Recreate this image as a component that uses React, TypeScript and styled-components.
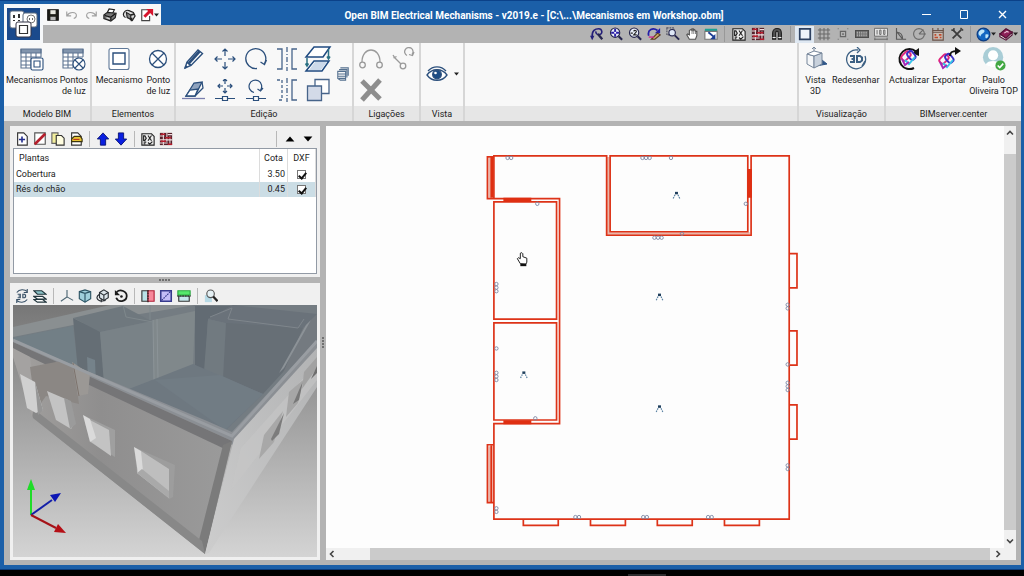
import React from 'react';
import styled, { createGlobalStyle } from 'styled-components';

const GlobalStyle = createGlobalStyle`
  * { box-sizing: border-box; }
  html, body { margin: 0; background: #000; }
  body, button, input, table {
    font-family: Roboto, 'Liberation Sans', sans-serif;
    font-size: 9px;
    line-height: 11px;
    color: #1c1c1c;
  }
  button { border: 0; margin: 0; padding: 0; background: none; }
`;

/* ---------- Window frame ---------- */

const Desktop = styled.div`
  display: flex;
  flex-direction: column;
  height: 100vh;
  min-height: 400px;
  background: #000;
`;

const Window = styled.div`
  flex: 1;
  min-height: 0;
  display: flex;
  flex-direction: column;
  background: #1b5fa8;
  border-top: 1px solid #0b4189;
  border-bottom: 1px solid #0b3a78;
  padding: 0 3px 4px 4px;
`;

const Taskbar = styled.div`
  height: 6px;
  display: flex;
  align-items: flex-end;
  justify-content: center;
  padding-left: 270px;
`;

const TaskIndicator = styled.div`
  width: 38px;
  height: 2px;
  background: #2c2c2e;
`;

const Header = styled.header`
  display: grid;
  grid-template-columns: 39px 1fr;
  grid-template-rows: 24px 18px;
`;

const AppButton = styled.button`
  grid-row: 1 / 3;
  align-self: end;
  height: 39px;
  width: 39px;
  background: #f6f8fa;
  display: flex;
  align-items: center;
  justify-content: center;
`;

const TitleBar = styled.div`
  display: flex;
  align-items: flex-end;
`;

const QuickBar = styled.div`
  display: flex;
  align-items: center;
  width: 118px;
  height: 21px;
  background: #f8f8f8;
`;

const Title = styled.h1`
  flex: 1;
  margin: 0;
  align-self: center;
  padding-top: 4px;
  text-align: center;
  white-space: nowrap;
  font-size: 10px;
  line-height: 13px;
  font-weight: bold;
  color: #fff;
`;

const WindowButton = styled.button`
  width: 38px;
  height: 21px;
  display: flex;
  align-items: center;
  justify-content: center;
`;

const ViewBar = styled.div`
  display: flex;
  align-items: center;
  justify-content: flex-end;
  padding-right: 2px;
  background: #b3b3b3;
`;

const ToolButton = styled.button<{ $active?: boolean; $wide?: boolean }>`
  width: ${p => (p.$wide ? 22 : 19)}px;
  height: 17px;
  display: flex;
  align-items: center;
  justify-content: center;
  background: ${p => (p.$active ? '#dfe8f2' : 'none')};
`;

const Divider = styled.span`
  width: 9px;
  height: 16px;
  display: flex;
  justify-content: center;
  &::before {
    content: '';
    width: 1px;
    background: #989898;
  }
`;

const PanelDivider = styled(Divider)`
  &::before { background: #b8b8b8; }
`;

/* ---------- Ribbon ---------- */

const Ribbon = styled.nav`
  display: flex;
  height: 78px;
  background: #f8f8f8;
`;

const Group = styled.section<{ $width?: number }>`
  ${p => (p.$width ? `width: ${p.$width}px;` : 'flex: 1;')}
  display: flex;
  flex-direction: column;
  border-right: 2px solid #d6d6d6;
  &:last-child { border-right: 0; }
`;

const GroupBody = styled.div`
  flex: 1;
  display: flex;
  justify-content: space-evenly;
  align-items: flex-start;
`;

const GroupLabel = styled.h2`
  margin: 0;
  height: 15px;
  background: #e6e6e6;
  text-align: center;
  font-size: 9px;
  line-height: 16px;
  font-weight: normal;
`;

const BigButton = styled.button`
  padding-top: 4px;
  display: flex;
  flex-direction: column;
  align-items: center;
  gap: 4px;
  white-space: pre;
  text-align: center;
`;

const EditGrid = styled.div`
  display: grid;
  grid-template-columns: repeat(5, 31px);
  grid-template-rows: 31px 31px;
`;

const LinkGrid = styled(EditGrid)`
  grid-template-columns: 32px 32px;
`;

const CellButton = styled.button`
  display: flex;
  align-items: center;
  justify-content: center;
`;

const SideButton = styled(CellButton)`
  height: 62px;
  gap: 6px;
`;

/* ---------- Work area ---------- */

const Work = styled.main`
  flex: 1;
  min-height: 0;
  display: flex;
  background: #b3b3b3;
  padding: 5px 5px 5px 6px;
`;

const Side = styled.aside`
  width: 310px;
  display: flex;
  flex-direction: column;
`;

const Panel = styled.section<{ $grow?: boolean }>`
  ${p => (p.$grow ? 'flex: 1; min-height: 0;' : 'height: 151px;')}
  display: flex;
  flex-direction: column;
  background: #f0f0f0;
  padding: 3px;
`;

const PanelBar = styled.div`
  display: flex;
  align-items: center;
  height: 19px;
`;

const PanelButton = styled.button`
  width: 18px;
  height: 18px;
  display: flex;
  align-items: center;
  justify-content: center;
`;

const Spacer = styled.span`
  flex: 1;
`;

const SplitterRow = styled.div`
  height: 6px;
  display: flex;
  align-items: center;
  justify-content: center;
`;

const SplitterColumn = styled(SplitterRow)`
  height: auto;
  width: 6px;
`;

const ListBox = styled.div`
  flex: 1;
  background: #fff;
  border: 1px solid #929aa5;
`;

const PlanTable = styled.table`
  width: 100%;
  border-collapse: collapse;
  table-layout: fixed;
  th, td { padding: 0 2px; border-right: 1px solid #dcdcdc; }
  th { height: 18px; font-weight: normal; text-align: center; }
  td { height: 15px; }
  th:first-child { text-align: left; padding-left: 5px; }
`;

const PlanRow = styled.tr<{ $selected?: boolean }>`
  background: ${p => (p.$selected ? '#cbdde5' : '#fff')};
`;

const NumberCell = styled.td`
  text-align: right;
`;

const CheckCell = styled.td`
  text-align: center;
`;

const Check = styled.input`
  appearance: none;
  display: block;
  width: 9px;
  height: 9px;
  margin: 0 auto;
  border: 1px solid #777;
  background: #fff;
  &:checked::after {
    content: '';
    display: block;
    width: 3px;
    height: 6px;
    margin: 0 0 0 2px;
    border: solid #111;
    border-width: 0 2px 2px 0;
    transform: rotate(40deg);
  }
`;

const Scene = styled.svg`
  display: block;
  width: 100%;
  flex: 1;
  min-height: 0;
`;

const CanvasFrame = styled.section`
  flex: 1;
  min-width: 0;
  display: grid;
  grid-template-columns: 1fr 12px;
  grid-template-rows: 1fr 12px;
  background: #f0f0f0;
`;

const Plan = styled.svg`
  width: 100%;
  height: 100%;
  min-height: 0;
  background: #fdfdfd;
`;

const VScroll = styled.div`
  display: flex;
  flex-direction: column;
  align-items: center;
`;

const HScroll = styled.div`
  display: flex;
  align-items: center;
`;

const ScrollArrow = styled.button`
  width: 12px;
  height: 14px;
  display: flex;
  align-items: center;
  justify-content: center;
`;

const VThumb = styled.div`
  flex: 1;
  width: 12px;
  margin: 14px 0 4px;
  background: #cbcbcb;
`;

const HThumb = styled.div`
  flex: 1;
  height: 12px;
  margin-left: 32px;
  margin-right: 2px;
  background: #cbcbcb;
`;

/* ---------- Icons ---------- */

const NAVY = '#2b4f7c';

type IconProps = { s?: number; children: React.ReactNode; stroke?: string; w?: number; box?: number };

const Svg = ({ s = 14, box = 16, stroke = '#222', w = 1.3, children }: IconProps) => (
  <svg width={s} height={s} viewBox={`0 0 ${box} ${box}`} fill="none" stroke={stroke} strokeWidth={w} aria-hidden="true">
    {children}
  </svg>
);

const Lens = ({ children }: { children?: React.ReactNode }) => (
  <>
    <circle cx="7" cy="6.5" r="5.3" fill="#e8eef8" stroke="#26264e" />
    <path d="M11 10.5l4 4" stroke="#26264e" strokeWidth="2.4" />
    {children}
  </>
);

const Dropdown = () => (
  <svg width="5" height="4" viewBox="0 0 5 4" aria-hidden="true"><path d="M0 0.5h5L2.5 3.5z" fill="#222" /></svg>
);

const DxfSheet = () => (
  <>
    <path d="M1 2h11l3 3v10H1z" fill="#eee" stroke="#222" />
    <path d="M3 4.500v5h1.500l1.500-2.500-1.500-2.500zM8 4l4 6M12 4l-4 6M3 11.500h3M3 13.500h2M8 12l2 2 3-3" stroke="#222" />
  </>
);

const DxfLayers = () => (
  <>
    <path d="M1 1h14v14H1z" fill="#55222c" stroke="none" />
    <path d="M1 4.500h5M10 3h5M1 9h14M1 12.500h9M5 1v14M9 1v10M12.500 5v10" stroke="#f0dcde" strokeWidth="1.200" />
    <path d="M2 2.500h5M7 6.500h7M2 10.500h6M10 14h5" stroke="#b81b2c" strokeWidth="1.600" />
  </>
);

const icons: Record<string, React.ReactNode> = {
  save: <Svg><path d="M2 2h12v12H2z" fill="#1e1e18" stroke="#111" /><path d="M5 2.500h6v4.500H5z" fill="#e8e8e0" stroke="none" /><path d="M5 10h6v4H5z" fill="#bbb" stroke="none" /></Svg>,
  undo: <Svg stroke="#a0a0a0"><path d="M2 4v5h5M2.500 8.500C5 4 13 4 13 8.500c0 2-1.500 3-3 3.500" /></Svg>,
  redo: <Svg stroke="#a0a0a0"><path d="M14 4v5H9M13.500 8.500C11 4 3 4 3 8.500c0 2 1.500 3 3 3.500" /></Svg>,
  print: <Svg><path d="M5 5l2-4 6 1-2 4" fill="#fff" /><path d="M1 8l4-3 10 1-1 5-5 4-8-3z" fill="#777" /><path d="M2 8.500l7 2 5-4M9 11v3" stroke="#111" /><path d="M4 11l4 1.500" stroke="#ddd" /></Svg>,
  plotter: <Svg><path d="M4 11C-1 8 3 1 8 3l5 2 2 4-3 5-3-1" fill="#ddd" /><path d="M5 5l5 3v5l-4-2z" fill="#888" /><path d="M10 8l4-1M11 11v4" strokeWidth="2" /></Svg>,
  exporter: <Svg><path d="M9 2H2v12.500h9V9" fill="#fff" stroke="#444" /><path d="M5 10l6-6" stroke="#d6142c" strokeWidth="3.400" /><path d="M7 1h8v8z" fill="#d6142c" stroke="none" /></Svg>,
  zoomPrev: <Svg stroke="#241f7a"><path d="M2.500 11C2 4 6 2 10 2c4 0 5 6 1 6.500C8 9 6 7 7 5" strokeWidth="1.800" /><path d="M9 8l5 6" strokeWidth="2.600" stroke="#26264e" /><path d="M0 10h5l-2.500 5z" fill="#241f7a" stroke="none" /></Svg>,
  zoomAll: <Svg><Lens><path d="M7 2v9M2.500 6.500h9" stroke="#2a1fa8" strokeWidth="2.200" /><circle cx="7" cy="6.500" r="1.200" fill="#fff" stroke="none" /></Lens></Svg>,
  zoomTwo: <Svg><Lens><path d="M3 7h2.500M6.500 5c.5-1.500 3.500-1.500 3 .5L6.500 9H10" stroke="#222" /></Lens></Svg>,
  redraw: <Svg><path d="M2 10C0 3 7 0 12 4" stroke="#241fa8" strokeWidth="2" /><path d="M15 1v6H9z" fill="#241fa8" stroke="none" /><path d="M5 14l7-7 3 2-6 5z" fill="#c9a766" stroke="#5c3b22" /><path d="M2 11.500h6" stroke="#d02a8c" strokeWidth="1.600" /></Svg>,
  zoomWin: <Svg><path d="M1 1h8v8H1z" fill="none" stroke="#556" strokeDasharray="2 1" /><circle cx="7" cy="6.500" r="3.700" fill="#dfe8f8" stroke="#26264e" /><path d="M10 9.500l5 5" stroke="#26264e" strokeWidth="2.200" /></Svg>,
  pan: <Svg><path d="M5 14L2 9l1-1 2 1V4l1.500-1L8 4V2l1.500 0v2L11 3l1 2 1.500 0v5L12 14z" fill="#fff" stroke="#555" /><path d="M8 4v4M10 4v4M12 5v3" stroke="#777" strokeWidth="1" /></Svg>,
  fitWin: <Svg><path d="M1 2h14v3H1z" fill="#1ba094" stroke="none" /><path d="M1 5h14v9H1z" fill="#fff" stroke="#777" /><path d="M5 6l6 5" stroke="#1d3e94" strokeWidth="2.200" /><path d="M13 8v6H7z" fill="#1d3e94" stroke="none" /></Svg>,
  dxfSheet: <Svg><DxfSheet /></Svg>,
  dxfLayers: <Svg><DxfLayers /></Svg>,
  magnet: <Svg><path d="M3 14V7C3 0 13 0 13 7v7h-3.500V7c0-3-3-3-3 0v7z" fill="#555" stroke="#1d1d1d" /><path d="M3 12h3.500M9.500 12H13" stroke="#eee" /></Svg>,
  ortho: <Svg stroke="#2e4160" w={2}><path d="M2 2h12v12H2z" fill="#eef3fa" /></Svg>,
  grid: <Svg stroke="#6a6a6a" w={1.2}><path d="M3.500 1v14M8 1v14M12.500 1v14M1 3.500h14M1 8h14M1 12.500h14" /></Svg>,
  snap: <Svg stroke="#666"><path d="M5 5h6v6H5z" /><path d="M8 7v2M7 8h2M2 2h1M13 2h1M2 14h1M13 14h1" /></Svg>,
  keyboard: <Svg stroke="#4d4d4d"><path d="M0.500 4h15v8h-15z" fill="#666" /><path d="M2 6h12M2 8h12M2 10h12" stroke="#ddd" strokeWidth="0.900" strokeDasharray="1.500 1" /></Svg>,
  measure: <Svg stroke="#6a6a6a" w={1.1}><path d="M0.500 1.500h15v9h-15z" fill="#e4e4e4" /><path d="M3.500 3.500v5M8 3.500h-1.500v5H8zM12.500 3.500H11v5h1.500zM0.500 14h15M1 12v3M15 12v3" /></Svg>,
  angle: <Svg stroke="#5a5a5a"><path d="M4 1v13h11M4 6c5 0 7 4 7 8M4 5l7 9" /></Svg>,
  polar: <Svg stroke="#6a6a6a"><circle cx="8" cy="8" r="6.200" /><path d="M8 8h8M8 8l5-5" /></Svg>,
  calendar: <Svg stroke="#6a5248"><path d="M2 4h12v11H2z" fill="#c8bdb4" /><path d="M2 1v3M8 1v3M14 1v3M2 6h12" /><path d="M4 9h2M9 9h3M4 12h4M10 12h2" stroke="#c04a2c" strokeWidth="1.800" /></Svg>,
  tools: <Svg stroke="#3c3c3c"><path d="M3 13L13 3M3 3l10 10" strokeWidth="2" /><path d="M1.500 3.500L4.500 4l0-3M12 1l3 3" strokeWidth="1.600" /></Svg>,
  globe: <Svg s={15}><circle cx="8" cy="8" r="6.800" fill="#1467c2" stroke="#0c3d84" /><path d="M3 5c3-4 7-2 6 0S5 7 5 10C3 9 2 7 3 5zM10 8c3-1 4 0 3 2s-3 3-3 1z" fill="#bfe4f8" stroke="none" /></Svg>,
  book: <Svg><path d="M1 8l7-6 7 4-7 7z" fill="#8c2057" stroke="#521033" /><path d="M1 8v3l7 4 7-6V6l-7 7z" fill="#eee" stroke="#521033" /><path d="M6 7l3-2 2 1" stroke="#f0c8dc" /></Svg>,
  addPlan: <Svg><path d="M3 1h7l4 4v10H3z" fill="#fff" stroke="#333" /><path d="M8 5v7M4.500 8.500h7" stroke="#222c8c" strokeWidth="1.800" /></Svg>,
  erasePlan: <Svg><path d="M2 1h12v13H2z" fill="#fff" stroke="#555" /><path d="M2 14L14 2" stroke="#b51f2c" strokeWidth="3" /></Svg>,
  copyPlan: <Svg><path d="M1 1h7v12H1z" fill="#f2ee9c" stroke="#666" /><path d="M6 4h6l3 3v8H6z" fill="#fffde0" stroke="#333" /></Svg>,
  openPlan: <Svg><path d="M3 1h7l4 4v10H3z" fill="#fff" stroke="#333" /><path d="M3 8l3-3h7l2 3v3H3z" fill="#e6c334" stroke="#3b3410" /><path d="M5 8.500h7" stroke="#b93520" /></Svg>,
  up: <Svg><path d="M8 1l6.500 7H11v7H5V8H1.500z" fill="#0a1fe0" stroke="#061070" strokeWidth="1" /></Svg>,
  down: <Svg><path d="M8 15L1.500 8H5V1h6v7h3.500z" fill="#0a1fe0" stroke="#061070" strokeWidth="1" /></Svg>,
  triUp: <Svg s={10}><path d="M1 12h14L8 4z" fill="#000" stroke="none" /></Svg>,
  triDown: <Svg s={10}><path d="M1 4h14l-7 8z" fill="#000" stroke="none" /></Svg>,
  orbit3d: <Svg stroke="#3a5268"><path d="M2 4c3-4 9-4 12-1M14 0v4h-4M14 12c-3 4-9 4-12 1M2 16v-4h4" /><path d="M3 6h3v4H3M4 8h2M9 6v4h2l1-1V7l-1-1z" strokeWidth="1.400" /></Svg>,
  layers3d: <Svg stroke="#22363d"><path d="M1 12l4 3h10l-4-3zM1 8.500l4 3h10l-4-3z" fill="#fff" /><path d="M1 2h9l5 4H5z" fill="#8cc4c8" /></Svg>,
  axes: <Svg stroke="#4d6673"><path d="M8 1v8l-7 5M8 9l7 4" /></Svg>,
  cube: <Svg stroke="#2c5464"><path d="M1.500 3L8 1l6.500 2v8L8 15l-6.500-4z" fill="#9fcfdb" /><path d="M8 5v10M1.500 3L8 5l6.500-2" /></Svg>,
  cubeSpin: <Svg stroke="#2a3036"><path d="M4 4l5-3 5 3v6l-5 3-5-3z" fill="#dbe4ea" /><path d="M4 4l5 3 5-3M9 7v6M4 6C-1 9 1 13 6 14l5-1M6 11v4" /></Svg>,
  rotateBack: <Svg stroke="#1c1c1c" w={2}><path d="M3 3.500c4-4 12-1 11.500 5S5 16 2.500 10" /><path d="M1 1v6h6z" fill="#1c1c1c" stroke="none" /><circle cx="8.500" cy="8.500" r="1.500" fill="#1c1c1c" stroke="none" /></Svg>,
  sectionX: <Svg><path d="M1 2h7v12H1z" fill="#b9e1e6" stroke="#333" /><path d="M8 2h7v12H8z" fill="#f7889a" stroke="#b02137" /><path d="M8 1v14" stroke="#222" strokeDasharray="2 1" /></Svg>,
  sectionY: <Svg><path d="M2 2h12v12H2z" fill="#c3bcf8" stroke="#373a8c" strokeWidth="1.800" /><path d="M3 13L14 2" stroke="#373a8c" strokeDasharray="2 1" /></Svg>,
  sectionZ: <Svg><path d="M2 8h12v6H2z" fill="#c4e6ea" stroke="#333" /><path d="M1 2h14v5H1z" fill="#55e86c" stroke="#2ca843" /><path d="M0 8h16" stroke="#222" strokeDasharray="2 1" /></Svg>,
  find: <Svg><path d="M1 7h8v8H1z" fill="#b7dae6" stroke="none" /><circle cx="7.500" cy="5.500" r="4.300" fill="#e5f0f4" stroke="#555" /><path d="M10.500 8.500l5 5.500" stroke="#222" strokeWidth="2.600" /></Svg>,
};

const TableGrid = () => (
  <>
    <path d="M1 2h20v19H1z" fill="#fff" stroke="none" />
    <path d="M1 2h20v4H1z" fill="#8295ad" />
    <path d="M1 2v19h10M21 2v8M1 10h20M1 14h10M1 18h10M6 6v15M11 6v15M16 6v5" />
  </>
);

const Arrows = () => (
  <path d="M11 1v7M11 14v7M1 11h7M14 11h7M8.500 3.500L11 1l2.500 2.500M8.500 18.500L11 21l2.500-2.500M3.500 8.500L1 11l2.500 2.500M18.500 8.500L21 11l-2.500 2.500" />
);

const SmallNode = () => <path d="M1 19.500h7.500M13.500 19.500H21M8.500 17.500h5v4h-5z" />;

const Swirl = () => (
  <g strokeWidth="1.900">
    <rect x="6" y="4" width="6" height="10" rx="2.500" transform="rotate(45 9 9)" stroke="#e0247c" />
    <rect x="11" y="4" width="6" height="9" rx="2.500" transform="rotate(-40 14 8)" stroke="#3b2fc4" />
    <path d="M18 10l-6 7-4-4" stroke="#35c5ea" />
    <path d="M5 12l3 6 4-3" stroke="#a428b8" />
  </g>
);

const big: Record<string, React.ReactNode> = {
  tableMech: <Svg s={24} box={24} stroke="#5e7592" w={1.1}><TableGrid /><rect x="11" y="11" width="12" height="12" rx="1.500" fill="#fff" stroke={NAVY} /><path d="M14 14h6v6h-6z" stroke={NAVY} /></Svg>,
  tableLight: <Svg s={24} box={24} stroke="#5e7592" w={1.1}><TableGrid /><circle cx="17" cy="17" r="6" fill="#fff" stroke={NAVY} /><path d="M13 13l8 8M21 13l-8 8" stroke={NAVY} /></Svg>,
  mech: <Svg s={24} box={24} stroke="#5f7898" w={1.1}><rect x="2" y="1.500" width="20" height="21" rx="2" fill="#fff" /><path d="M6 6h12v11H6z" fill="#fff" stroke={NAVY} strokeWidth="1.400" /></Svg>,
  light: <Svg s={24} box={24} stroke={NAVY} w={1.3}><circle cx="12" cy="12" r="8.500" fill="#fff" /><path d="M6 6l12 12M18 6L6 18" /></Svg>,
  pencil: <Svg s={22} box={22} stroke={NAVY} w={1.4}><path d="M2 20l2-6L15 2l4.500 3.500L8 17.500z" fill="#fff" /><path d="M6 15L16.500 3.500" strokeWidth="2.600" /><path d="M4 14l4 3.500M2 20l2-2" strokeWidth="1.800" /></Svg>,
  move: <Svg s={22} box={22} stroke={NAVY} w={1.2}><Arrows /></Svg>,
  rotate: <Svg s={24} box={24} stroke={NAVY} w={1.3}><path d="M13 21.500A10 10 0 1 1 20.500 16.500M22.500 13l-2 4.500-4-2.500" /></Svg>,
  mirror: <Svg s={24} box={24} stroke="#47648a" w={1.3}><path d="M2 2h5v20H2M22 2h-5v20h5" /><path d="M12 0v24" strokeDasharray="5 2 1 2" /></Svg>,
  floors: <Svg s={28} box={28} stroke="#1f4a80" w={1.5}><path d="M2 12L10 2h16l-7 10zM2 26l8-10h15l-7 10z" fill="#fff" /><path d="M5 25l6-8h12l-6 8z" fill="#ccd9ea" stroke="none" /><path d="M3 13v7M24.500 4v9M1.500 18.500L3 21l1.500-2.500M23 11.500l1.500 2.500L26 11.500" stroke="#2c7284" /></Svg>,
  eraser: <Svg s={24} box={24} stroke={NAVY} w={1.3}><path d="M4 18L12 5l8-1-7 14z" fill="#8fa3be" /><path d="M4 18l4-6 8-1-3 7z" fill="#fff" /><path d="M13 18l8-8-1-6" /><path d="M0 20.500h23" stroke="#7a7fae" /></Svg>,
  moveNode: <Svg s={22} box={22} stroke={NAVY} w={1.2}><path d="M11 0v5M11 9v5M4 7h5M13 7h5M9 2l2-2 2 2M9 12l2 2 2-2M6 5L4 7l2 2M16 5l2 2-2 2" /><SmallNode /></Svg>,
  rotateNode: <Svg s={22} box={22} stroke={NAVY} w={1.2}><path d="M9 13.500A6.300 6.300 0 1 1 15.500 11M18 9l-2.500 3L12.500 10" /><SmallNode /></Svg>,
  mirrorNode: <Svg s={24} box={24} stroke="#47648a" w={1.3}><path d="M2 2h5v20H2" strokeDasharray="3 2" /><path d="M22 2h-5v20h5" /><path d="M12 0v24" strokeDasharray="5 2 1 2" /></Svg>,
  copy: <Svg s={24} box={24} stroke="#47648a" w={1.3}><path d="M9 1.500h14v14H9z" fill="#fff" /><path d="M1.500 8h14v14.500h-14z" fill="#d3dae8" /></Svg>,
  stack: <Svg s={14} stroke="#54708f" w={1.2}><path d="M5 1h9v9M3.500 3h9v9M2 5h9v10H5l-3-2zM2 8h9M2 10.500h9M3 13h8" /></Svg>,
  arc: <Svg s={24} box={24} stroke="#9a9a9a" w={1.3}><path d="M3 15C3 -1 21 -1 21 15" /><circle cx="3.500" cy="18" r="2.800" /><circle cx="20.500" cy="18" r="2.800" /></Svg>,
  relink: <Svg s={24} box={24} stroke="#9a9a9a" w={1.3}><path d="M2 8l2 3 6 6" /><path d="M2.500 11l3-1.500" /><circle cx="12" cy="19" r="2.800" /><path d="M16 8.500A4.200 4.200 0 1 1 21 7.500M23 5l-1.500 3.500L18 7.500" /></Svg>,
  cross: <Svg s={24} box={24} stroke="#8e8e8e" w={5}><path d="M3 3l18 18M21 2L3 22" /></Svg>,
  eye: <Svg s={22} box={22} stroke={NAVY} w={1.3}><path d="M1 12C6 5 16 5 21 12C16 19 6 19 1 12z" fill="#fff" /><path d="M2 8C7 2.500 15 2.500 20 8" /><circle cx="11" cy="11.500" r="4.300" fill="#1d4c84" /><circle cx="9.500" cy="10" r="1.300" fill="#fff" stroke="none" /></Svg>,
  view3d: <Svg s={24} box={24} stroke="#76869a" w={1}><path d="M12 19l11-2-5-4z" fill="#2f5688" stroke="#2f5688" /><path d="M3 7l7 2v12l-7-4z" fill="#f4f6f8" /><path d="M10 9l8-3v11l-8 4z" fill="#c8d1dc" /><path d="M3 7l7-3 8 2-8 3z" fill="#fff" /><path d="M10 0v4M8 2l2-2 2 2" /></Svg>,
  redraw3d: <Svg s={24} box={24} stroke="#3d6184" w={1.3}><path d="M14 3A9.500 9.500 0 1 0 21 9M13 0l3 3-3 3M21 14l-3 5" /><path d="M6 9h4v3H7.500M10 12v3H6M13 9v6h3l2-1.500v-3L16 9z" strokeWidth="2" /></Svg>,
  update: <Svg s={24} box={24}><path d="M17 21A10 10 0 1 1 19 4.500" stroke="#111" strokeWidth="2" /><path d="M22 1v8l-7-3z" fill="#111" stroke="none" /><Swirl /></Svg>,
  publish: <Svg s={24} box={24}><g transform="translate(-2 3)"><Swirl /></g><path d="M13 9c0-4 2-5 7-5" stroke="#111" strokeWidth="2" /><path d="M18 0l6 4-6 4z" fill="#111" stroke="none" /></Svg>,
  user: <Svg s={24} box={26} stroke="none"><circle cx="12" cy="11" r="11" fill="#a9cdd6" /><circle cx="12" cy="9" r="5.500" fill="#fff" /><path d="M4 19c2-5 14-5 16 0-4 4-12 4-16 0z" fill="#fff" /><circle cx="20" cy="20" r="5.500" fill="#43a843" /><path d="M17 20l2.200 2.300L23 18" fill="none" stroke="#fff" strokeWidth="1.700" /></Svg>,
};

const Logo = () => (
  <svg width="33" height="32" viewBox="0 0 33 32" fill="none" aria-hidden="true">
    <path d="M0 0h33v32H0z" fill="#1b4a8c" />
    <rect x="3" y="3" width="14" height="17" rx="2" fill="#fff" stroke="#58687c" />
    <rect x="16" y="5" width="14" height="14" rx="2" fill="#fff" stroke="#58687c" />
    <path d="M7 7v3M12 6v4M7 12v1M12 12v1" stroke="#333" strokeWidth="2" />
    <circle cx="24" cy="11" r="4" stroke="#777" />
    <path d="M22 11h1M25 11h1" stroke="#333" strokeWidth="1.500" />
    <rect x="9" y="14" width="15" height="15" rx="2" fill="#fff" stroke="#334" />
    <path d="M12.500 17.500h8v8h-8z" stroke="#333" strokeWidth="1.200" />
  </svg>
);

/* ---------- Data ---------- */

type Tool = [string, string];

const quickTools: Tool[] = [['save', 'Guardar'], ['undo', 'Desfazer'], ['redo', 'Refazer'], ['print', 'Imprimir'], ['plotter', 'Plotter']];
const zoomTools: Tool[] = [['zoomPrev', 'Vista anterior'], ['zoomAll', 'Ver tudo'], ['zoomTwo', 'Zoom 2x'], ['redraw', 'Redesenhar'], ['zoomWin', 'Zoom janela'], ['pan', 'Mover vista'], ['fitWin', 'Ajustar janela']];
const dxfTools: Tool[] = [['dxfSheet', 'Modelos DXF'], ['dxfLayers', 'Camadas DXF'], ['magnet', 'Capturas']];
const drawTools: Tool[] = [['ortho', 'Ortogonal'], ['grid', 'Grelha'], ['snap', 'Snap'], ['keyboard', 'Teclado'], ['measure', 'Medir'], ['angle', 'Ângulo'], ['polar', 'Polar'], ['calendar', 'Etiquetas'], ['tools', 'Configuração']];
const editTools: Tool[] = [['pencil', 'Editar'], ['move', 'Mover'], ['rotate', 'Rodar'], ['mirror', 'Simetria'], ['floors', 'Copiar para planta'], ['eraser', 'Apagar'], ['moveNode', 'Mover nó'], ['rotateNode', 'Rodar nó'], ['mirrorNode', 'Simetria com cópia'], ['copy', 'Copiar']];
const linkTools: Tool[] = [['arc', 'Ligar'], ['relink', 'Religar'], ['cross', 'Eliminar ligação']];
const planTools: Tool[] = [['addPlan', 'Nova planta'], ['erasePlan', 'Eliminar planta'], ['copyPlan', 'Copiar planta'], ['openPlan', 'Importar planta']];
const sceneTools: Tool[][] = [
  [['orbit3d', 'Orbitar'], ['layers3d', 'Camadas']],
  [['axes', 'Eixos'], ['cube', 'Perspectiva'], ['cubeSpin', 'Rodar'], ['rotateBack', 'Repor']],
  [['sectionX', 'Corte X'], ['sectionY', 'Corte Y'], ['sectionZ', 'Corte Z']],
  [['find', 'Procurar']],
];
const plans = [
  { name: 'Cobertura', level: '3.50', selected: false },
  { name: 'Rés do chão', level: '0.45', selected: true },
];

const Tools = ({ items, active }: { items: Tool[]; active?: string }) => (
  <>
    {items.map(([id, label]) => (
      <ToolButton key={id} aria-label={label} $active={id === active}>{icons[id]}</ToolButton>
    ))}
  </>
);

const PanelTools = ({ items }: { items: Tool[] }) => (
  <>
    {items.map(([id, label]) => (
      <PanelButton key={id} aria-label={label}>{icons[id]}</PanelButton>
    ))}
  </>
);

const Cells = ({ items }: { items: Tool[] }) => (
  <>
    {items.map(([id, label]) => (
      <CellButton key={id} aria-label={label}>{big[id]}</CellButton>
    ))}
  </>
);

const Large = ({ id, children }: { id: string; children: React.ReactNode }) => (
  <BigButton>{big[id]}<span>{children}</span></BigButton>
);

const Chevron = ({ turn }: { turn: number }) => (
  <svg width="8" height="8" viewBox="0 0 8 8" fill="none" stroke="#444" strokeWidth="1.600" aria-hidden="true">
    <path d="M1 5.500L4 2.500l3 3" transform={`rotate(${turn} 4 4)`} />
  </svg>
);

const Dots = ({ vertical }: { vertical?: boolean }) => (
  <svg width={vertical ? 3 : 13} height={vertical ? 13 : 3} aria-hidden="true">
    {[0, 3, 6, 9].map(n => (
      <rect key={n} x={vertical ? 0 : n} y={vertical ? n : 0} width="2" height="2" fill="#707070" />
    ))}
  </svg>
);

/* ---------- Drawings ---------- */

const Building = () => (
  <Scene viewBox="13 305 304 252" preserveAspectRatio="xMidYMid slice" role="img" aria-label="Vista 3D do edifício">
    <defs>
      <linearGradient id="sky" x1="0" y1="0" x2="0" y2="1">
        <stop offset="0" stopColor="#777" />
        <stop offset="1" stopColor="#d4d4d4" />
      </linearGradient>
      <linearGradient id="front" x1="0" y1="0" x2="1" y2="0">
        <stop offset="0" stopColor="#a3a19f" />
        <stop offset="0.400" stopColor="#8f8e8e" />
        <stop offset="1" stopColor="#9b9b9b" />
      </linearGradient>
      <linearGradient id="flank" x1="1" y1="0" x2="0" y2="1">
        <stop offset="0" stopColor="#b2b3b4" />
        <stop offset="1" stopColor="#cdcdcd" />
      </linearGradient>
    </defs>
    <path d="M13 305h304v252H13z" fill="url(#sky)" />
    <path d="M13 333L125 305h192v45L230 436 13 342z" fill="#747c82" />
    <path d="M13 327L110 305h85L73 325 13 337z" fill="#8a8f91" />
    <path d="M13 338L73 326l7 58-67-40z" fill="#727f86" />
    <path d="M73 318l27 13 6 66-27-16z" fill="#656e75" />
    <path d="M87 357l8 3 1 25-8-4z" fill="#75828a" />
    <path d="M73 318l50-12 28 15-51 11z" fill="#6f787e" />
    <path d="M100 332l95-20-2 54-88 32z" fill="#798287" />
    <path d="M153 320l42-9-2 55-39 14z" fill="#80888b" />
    <path d="M153 320l1 60M157 319l1 60" stroke="#8c9498" />
    <path d="M123 305l3 12 27 5M150 305v15" stroke="#7f888c" fill="none" />
    <path d="M195 306h37l-24 13-3 54-10-8z" fill="#626b73" />
    <path d="M208 319l25-14 84 9v21l-21 6-72-18z" fill="#6a727a" />
    <path d="M208 319l18 4-3 55-19-7z" fill="#717a80" />
    <path d="M226 323l77 5-18 42-22 24-40-16z" fill="#676f76" />
    <path d="M210 317l22-9-4 11 70 9 6-9" fill="none" stroke="#7f868c" />
    <path d="M303 328l14-14v30l-34 29z" fill="#747a80" />
    <path d="M306 325l5-5-27 48-5 5z" fill="#8c9297" />
    <path d="M106 398l87-34 70 30-38 37z" fill="#6e7880" />
    <path d="M155 380l65-5 43 19-38 36z" fill="#717c84" />
    <path d="M13 340L207 421l25 11 85-92v12L232 445 13 347z" fill="#8b8f94" />
    <path d="M13 342l219 99-27 113L33 418 13 356z" fill="url(#front)" />
    <path d="M13 342l219 99-3 10L13 349z" fill="#757577" />
    <path d="M232 441l-27 113-7-10 25-99z" fill="#7b7b7b" />
    <path d="M33 418l172 136-3-13L30 406z" fill="#888" />
    <path d="M13 348l17 9 6 40-4 20-19-60z" fill="#a4a2a1" />
    <path d="M30 367l31-6 13 7 5 36-33-8-10 14z" fill="#8b8784" />
    <path d="M72 362l18 12-2 20-10 2z" fill="#9b9895" />
    <path d="M73 363l6 33" stroke="#7c726c" fill="none" />
    <path d="M20 374l15 8 8 28-7 3-9-5z" fill="#d0d0d0" />
    <path d="M35 382l8 28-5 5z" fill="#969696" />
    <path d="M47 391l21 9 6 24-3 5-15-9z" fill="#c3c3c3" />
    <path d="M64 398l7 3 5 23-6 5z" fill="#9b9b9b" />
    <path d="M83 415l32 15v27l-25-15z" fill="#9f9f9f" />
    <path d="M88 419l21 11 2 26-20-14z" fill="#c3c3c3" />
    <path d="M83 415l7 4 6 19-6 4z" fill="#dadada" />
    <path d="M134 447l41 18-2 32-4 2-32-26z" fill="#9d9d9d" />
    <path d="M141 451l28 18v29l-32-25z" fill="#bebebe" />
    <path d="M134 447l7 4 2 20-5 3z" fill="#dadada" />
    <path d="M142 469l27 22v7l-32-25z" fill="#a9a9a9" />
    <path d="M234 439l83-91v39L209 553l-4 1z" fill="url(#flank)" />
    <path d="M241 448l76-85v17L231 490z" fill="#c6c6c6" opacity=".6" />
    <path d="M13 340L232 436l85-95" stroke="#999da2" strokeWidth="3" fill="none" />
    <path d="M264 435l19-24-9 31-15 17z" fill="#a8a8a8" />
    <path d="M271 439l13-26-5 21-7 7z" fill="#7c7c7c" />
    <path d="M289 392l14-12-5 23-12 14z" fill="#a6a6a6" />
    <path d="M293 404l10-23-4 19z" fill="#777" />
    <path d="M304 372l13-15v11l-15 21z" fill="#a2a2a2" />
    <path d="M311 379l6-13v7z" fill="#6e6e6e" />
    <g strokeWidth="2">
      <path d="M31 515v-28" stroke="#1fdc28" />
      <path d="M31 479l4 11h-8z" fill="#1fdc28" />
      <path d="M31 515l21-15" stroke="#1420a8" />
      <path d="M61 493l-6 9-5-7z" fill="#0d16b4" />
      <path d="M31 515l25 13" stroke="#a51218" />
      <path d="M66 533l-12-1 4-8z" fill="#b50f16" />
    </g>
  </Scene>
);

const sockets: [number, number, number, boolean][] = [
  [509, 157, 2, false], [646, 157, 3, false], [671, 157, 1, false], [537, 203, 1, false],
  [658, 237, 3, false], [682, 233, 1, false], [746, 203, 1, false], [577, 517, 2, false],
  [645, 517, 2, false], [710, 517, 2, false], [535, 418, 1, false],
  [496, 287, 3, true], [496, 348, 1, true], [496, 376, 3, true], [496, 510, 2, true],
  [788, 306, 2, true], [788, 364, 1, true], [788, 386, 3, true], [788, 467, 2, true],
];

const lamps: [number, number][] = [[676, 193], [659, 295], [523, 373], [659, 407]];

const FloorPlan = () => (
  <Plan viewBox="326 125 678 423" role="img" aria-label="Planta do rés do chão">
    <g fill="none" stroke="#eab5a8" strokeWidth="3">
      <path d="M608 156v78M489.500 157v40M489.500 446v56M608 233h142" />
    </g>
    <g fill="none" stroke="#dd3318" strokeWidth="1.700">
      <path d="M493.500 197V155H606.500V234.500H751.300V155H789.500V519H493.500V423.300H559.300V197.800H487V156H493" />
      <path d="M610 155H748V231H610z" />
      <path d="M493.500 201H556.300V318.500H493.500z" />
      <path d="M493.500 322.300H556.300V419.700H493.500z" />
      <path d="M493.500 444.500H487V502.500H493.500" />
      <path d="M789.500 253h7.800v34.300h-7.800M789.500 330.300h7.800v34.300h-7.800M789.500 404.600h7.800v34.300h-7.800" />
      <path d="M523 519v6.300h35V519M590.300 519v6.300h35V519M657.300 519v6.300h35V519M724.600 519v6.300h35V519" />
    </g>
    <g fill="#df2f12">
      <path d="M490 156h3v41h-3zM490 445h2v58h-2zM503 197h28v4h-28zM503 420h28v4h-28zM748 168h4v29h-4z" />
    </g>
    <g fill="none" stroke="#7b86a3" strokeWidth="0.900">
      {sockets.map(([x, y, n, vertical]) =>
        Array.from({ length: n }, (_, i) => {
          const d = (i - (n - 1) / 2) * 3.6;
          return <circle key={`${x}-${y}-${i}`} cx={vertical ? x : x + d} cy={vertical ? y + d : y} r="1.700" />;
        }),
      )}
    </g>
    {lamps.map(([x, y]) => (
      <g key={`${x}-${y}`}>
        <path d={`M${x - 1} ${y - 2}h3v2.500h-3z`} fill="#20405e" />
        <path d={`M${x - 1} ${y + 1}l-2 4M${x + 2} ${y + 1}l2 4`} stroke="#5c84a4" strokeWidth="1.200" strokeDasharray="1.500 1" />
      </g>
    ))}
    <path d="M520 263l-3-5 1-1 2 1v-5.500l1.500-.5 1 1v3l4 1.500v4l-1 2z" fill="#fff" stroke="#222" strokeWidth="1" />
    <path d="M520 263h6v2.500h-6z" fill="#111" />
  </Plan>
);

/* ---------- Application ---------- */

export default function App() {
  return (
    <Desktop>
      <GlobalStyle />
      <Window>
        <Header>
          <AppButton aria-label="Menu da aplicação"><Logo /></AppButton>
          <TitleBar>
            <QuickBar>
              <Tools items={quickTools} />
              <ToolButton $wide aria-label="Exportar">{icons.exporter}<Dropdown /></ToolButton>
            </QuickBar>
            <Title>{'Open BIM Electrical Mechanisms - v2019.e - [C:\\...\\Mecanismos em Workshop.obm]'}</Title>
            <WindowButton aria-label="Minimizar"><Svg s={9} box={9} stroke="#fff" w={1}><path d="M0 4.500h9" /></Svg></WindowButton>
            <WindowButton aria-label="Maximizar"><Svg s={9} box={9} stroke="#fff" w={1}><path d="M0.500 0.500h7v8h-7z" /></Svg></WindowButton>
            <WindowButton aria-label="Fechar"><Svg s={9} box={9} stroke="#fff" w={1.4}><path d="M1 1l7 7M8 1L1 8" /></Svg></WindowButton>
          </TitleBar>
          <ViewBar>
            <Tools items={zoomTools} />
            <Divider />
            <Tools items={dxfTools} />
            <Divider />
            <Tools items={drawTools} active="ortho" />
            <Divider />
            <ToolButton $wide aria-label="Idioma">{icons.globe}<Dropdown /></ToolButton>
            <ToolButton $wide aria-label="Ajuda">{icons.book}<Dropdown /></ToolButton>
          </ViewBar>
        </Header>

        <Ribbon>
          <Group $width={88}>
            <GroupBody>
              <Large id="tableMech">Mecanismos</Large>
              <Large id="tableLight">{'Pontos\nde luz'}</Large>
            </GroupBody>
            <GroupLabel>Modelo BIM</GroupLabel>
          </Group>
          <Group $width={84}>
            <GroupBody>
              <Large id="mech">Mecanismo</Large>
              <Large id="light">{'Ponto\nde luz'}</Large>
            </GroupBody>
            <GroupLabel>Elementos</GroupLabel>
          </Group>
          <Group $width={178}>
            <GroupBody>
              <EditGrid><Cells items={editTools} /></EditGrid>
              <SideButton aria-label="Camadas">{big.stack}</SideButton>
            </GroupBody>
            <GroupLabel>Edição</GroupLabel>
          </Group>
          <Group $width={67}>
            <GroupBody>
              <LinkGrid><Cells items={linkTools} /></LinkGrid>
            </GroupBody>
            <GroupLabel>Ligações</GroupLabel>
          </Group>
          <Group $width={44}>
            <GroupBody>
              <SideButton aria-label="Vista">{big.eye}<Dropdown /></SideButton>
            </GroupBody>
            <GroupLabel>Vista</GroupLabel>
          </Group>
          <Group>
            <GroupBody />
            <GroupLabel />
          </Group>
          <Group $width={87}>
            <GroupBody>
              <Large id="view3d">{'Vista\n3D'}</Large>
              <Large id="redraw3d">Redesenhar</Large>
            </GroupBody>
            <GroupLabel>Visualização</GroupLabel>
          </Group>
          <Group $width={135}>
            <GroupBody>
              <Large id="update">Actualizar</Large>
              <Large id="publish">Exportar</Large>
              <Large id="user">{'Paulo\nOliveira TOP'}</Large>
            </GroupBody>
            <GroupLabel>BIMserver.center</GroupLabel>
          </Group>
        </Ribbon>

        <Work>
          <Side>
            <Panel>
              <PanelBar>
                <PanelTools items={planTools} />
                <PanelDivider />
                <PanelTools items={[['up', 'Subir'], ['down', 'Descer']]} />
                <PanelDivider />
                <PanelTools items={[['dxfSheet', 'Modelos DXF'], ['dxfLayers', 'Camadas DXF']]} />
                <Spacer />
                <PanelDivider />
                <PanelTools items={[['triUp', 'Planta superior'], ['triDown', 'Planta inferior']]} />
              </PanelBar>
              <ListBox>
                <PlanTable>
                  <colgroup><col /><col width="28" /><col width="28" /></colgroup>
                  <thead>
                    <tr><th>Plantas</th><th>Cota</th><th>DXF</th></tr>
                  </thead>
                  <tbody>
                    {plans.map(plan => (
                      <PlanRow key={plan.name} $selected={plan.selected}>
                        <td>{plan.name}</td>
                        <NumberCell>{plan.level}</NumberCell>
                        <CheckCell><Check type="checkbox" defaultChecked aria-label={`DXF ${plan.name}`} /></CheckCell>
                      </PlanRow>
                    ))}
                  </tbody>
                </PlanTable>
              </ListBox>
            </Panel>
            <SplitterRow><Dots /></SplitterRow>
            <Panel $grow>
              <PanelBar>
                {sceneTools.map((set, i) => (
                  <React.Fragment key={i}>
                    {i > 0 && <PanelDivider />}
                    <PanelTools items={set} />
                  </React.Fragment>
                ))}
              </PanelBar>
              <Building />
            </Panel>
          </Side>
          <SplitterColumn><Dots vertical /></SplitterColumn>
          <CanvasFrame>
            <FloorPlan />
            <VScroll>
              <ScrollArrow aria-label="Subir"><Chevron turn={0} /></ScrollArrow>
              <VThumb />
              <ScrollArrow aria-label="Descer"><Chevron turn={180} /></ScrollArrow>
            </VScroll>
            <HScroll>
              <ScrollArrow aria-label="Esquerda"><Chevron turn={270} /></ScrollArrow>
              <HThumb />
              <ScrollArrow aria-label="Direita"><Chevron turn={90} /></ScrollArrow>
            </HScroll>
          </CanvasFrame>
        </Work>
      </Window>
      <Taskbar><TaskIndicator /></Taskbar>
    </Desktop>
  );
}
